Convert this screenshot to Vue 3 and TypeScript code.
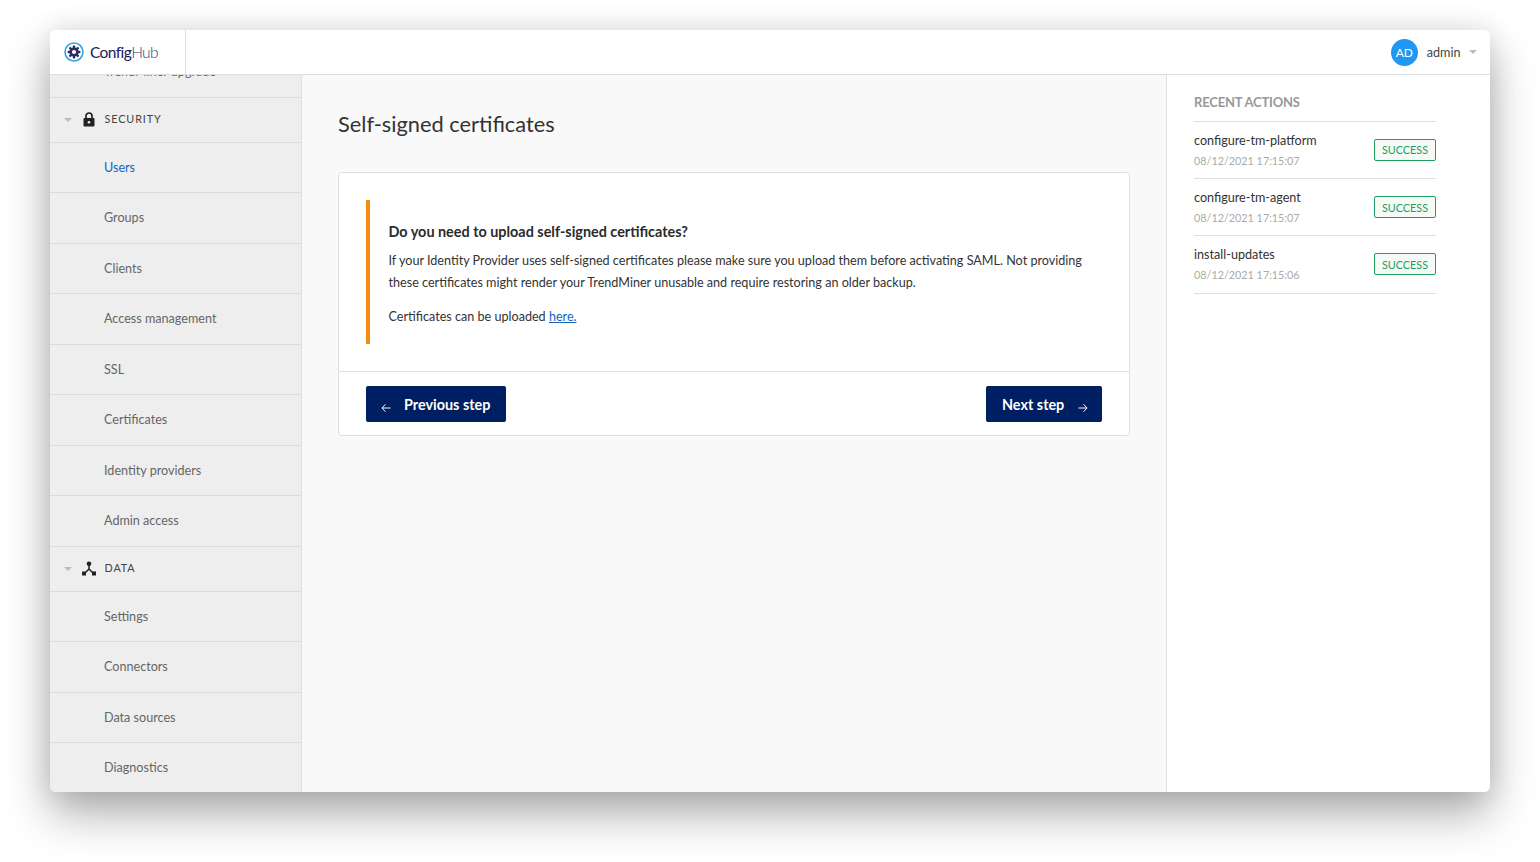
<script setup lang="ts">
const security: string[] = ['Users', 'Groups', 'Clients', 'Access management', 'SSL', 'Certificates', 'Identity providers', 'Admin access']
const data: string[] = ['Settings', 'Connectors', 'Data sources', 'Diagnostics']
const actions = [
  { name: 'configure-tm-platform', time: '08/12/2021 17:15:07' },
  { name: 'configure-tm-agent', time: '08/12/2021 17:15:07' },
  { name: 'install-updates', time: '08/12/2021 17:15:06' },
]
</script>

<template>
  <div class="page">
    <div class="window">
      <header class="topbar">
        <div class="brand">
          <svg class="logo" width="20" height="20" viewBox="0 0 20 20">
            <circle cx="10" cy="10" r="9" fill="none" stroke="#2ea3e0" stroke-width="1.6" />
            <g fill="#2f2a62">
              <circle cx="10" cy="10" r="4.6" />
              <rect x="8.8" y="3.6" width="2.4" height="12.8" rx=".6" />
              <rect x="8.8" y="3.6" width="2.4" height="12.8" rx=".6" transform="rotate(45 10 10)" />
              <rect x="8.8" y="3.6" width="2.4" height="12.8" rx=".6" transform="rotate(90 10 10)" />
              <rect x="8.8" y="3.6" width="2.4" height="12.8" rx=".6" transform="rotate(135 10 10)" />
            </g>
            <circle cx="10" cy="10" r="2.1" fill="#fff" />
          </svg>
          <span class="brand-text">Config<span class="hub">Hub</span></span>
        </div>
        <div class="user">
          <span class="avatar">AD</span>
          <span class="uname">admin</span>
          <span class="caret"></span>
        </div>
      </header>
      <div class="body">
        <aside class="sidebar">
          <div class="nav">
            <div class="row">TrendMiner upgrade</div>
            <div class="section">
              <span class="caret"></span>
              <svg class="sec-icon lock" width="12" height="15" viewBox="0 0 12 15">
                <path d="M3 6.5V4a3 3 0 0 1 6 0v2.500" fill="none" stroke="#222" stroke-width="1.7" />
                <rect x="0.500" y="6" width="11" height="8.500" rx="1" fill="#222" />
                <circle cx="6" cy="10.200" r="1.300" fill="#eee" />
              </svg>
              <span class="sec-label">SECURITY</span>
            </div>
            <div v-for="item in security" :key="item" class="row" :class="{ active: item === 'Users' }">{{ item }}</div>
            <div class="section">
              <span class="caret"></span>
              <svg class="sec-icon" width="14" height="15" viewBox="0 0 14 15">
                <circle cx="7" cy="2.800" r="2.300" fill="#222" />
                <path d="M7 3v5M7 8l-4 4M7 8l4 4" fill="none" stroke="#222" stroke-width="1.500" />
                <rect x="0" y="10.500" width="4" height="4" fill="#222" />
                <rect x="10" y="10.500" width="4" height="4" fill="#222" />
              </svg>
              <span class="sec-label">DATA</span>
            </div>
            <div v-for="item in data" :key="item" class="row">{{ item }}</div>
          </div>
        </aside>
        <main class="main">
          <h1 class="title">Self-signed certificates</h1>
          <section class="card">
            <div class="card-body">
              <div class="notice">
                <h2 class="notice-title">Do you need to upload self-signed certificates?</h2>
                <p class="para">If your Identity Provider uses self-signed certificates please make sure you upload them before activating SAML. Not providing these certificates might render your TrendMiner unusable and require restoring an older backup.</p>
                <p class="para last">Certificates can be uploaded <a class="link" href="#">here.</a></p>
              </div>
            </div>
            <div class="card-foot">
              <button class="btn prev">
                <svg class="arrow" width="10" height="10" viewBox="0 0 10 10"><path d="M9.500 5H1M4.500 1.300 0.900 5l3.600 3.700" fill="none" stroke="#fff" stroke-width="1" /></svg>
                <span class="btn-text">Previous step</span>
              </button>
              <button class="btn next">
                <span class="btn-text">Next step</span>
                <svg class="arrow" width="10" height="10" viewBox="0 0 10 10"><path d="M.5 5H9M5.500 1.300 9.100 5 5.500 8.700" fill="none" stroke="#fff" stroke-width="1" /></svg>
              </button>
            </div>
          </section>
        </main>
        <aside class="recent">
          <h3 class="recent-title">RECENT ACTIONS</h3>
          <div v-for="a in actions" :key="a.name" class="action">
            <div class="action-text">
              <div class="action-name">{{ a.name }}</div>
              <div class="action-time">{{ a.time }}</div>
            </div>
            <span class="badge">SUCCESS</span>
          </div>
        </aside>
      </div>
    </div>
  </div>
</template>

<style>
html, body { margin: 0; background: #fff; }
</style>

<style scoped>
.page {
  width: 1540px;
  height: 862px;
  padding: 30px 50px 70px;
  box-sizing: border-box;
  overflow: hidden;
  background: #fff;
  font-family: Lato, "Liberation Sans", sans-serif;
  color: #333;
}
.window {
  width: 1440px;
  height: 762px;
  display: flex;
  flex-direction: column;
  border-radius: 6px;
  overflow: hidden;
  background: #fff;
  box-shadow: 0 22px 45px rgba(0, 0, 0, .32), 0 0 28px rgba(0, 0, 0, .1);
}
.topbar {
  height: 45px;
  flex: none;
  box-sizing: border-box;
  display: flex;
  align-items: center;
  justify-content: space-between;
  background: #fff;
  border-bottom: 1px solid #dedede;
}
.brand {
  width: 136px;
  height: 44px;
  box-sizing: border-box;
  border-right: 1px solid #dedede;
  display: flex;
  align-items: center;
  padding-left: 14px;
  gap: 6px;
}
.brand-text {
  font-size: 15.500px;
  line-height: 18px;
  margin-top: -1px;
  letter-spacing: -.6px;
  color: #14205c;
}
.hub { font-weight: 300; color: #2c3a78; }
.user {
  display: flex;
  align-items: center;
  padding-right: 13px;
}
.avatar {
  width: 27px;
  height: 27px;
  border-radius: 50%;
  background: #2196f3;
  color: #fff;
  font-size: 12px;
  display: flex;
  align-items: center;
  justify-content: center;
}
.uname {
  font-size: 12.600px;
  margin: 0 8.500px 0 9px;
  color: #444;
}
.caret {
  width: 0;
  height: 0;
  border-left: 4.500px solid transparent;
  border-right: 4.500px solid transparent;
  border-top: 4.500px solid #bbb;
  display: block;
}
.body {
  flex: 1;
  display: flex;
  min-height: 0;
}
.sidebar {
  width: 252px;
  flex: none;
  box-sizing: border-box;
  background: #eee;
  border-right: 1px solid #e0e0e0;
  overflow: hidden;
}
.nav { margin-top: -28px; }
.row {
  height: 50.500px;
  box-sizing: border-box;
  padding-left: 54px;
  display: flex;
  align-items: center;
  font-size: 12.600px;
  color: #666;
  border-bottom: 1px solid #dcdcdc;
}
.row.active { color: #1565c0; }
.section {
  height: 45px;
  box-sizing: border-box;
  display: flex;
  align-items: center;
  padding-left: 14px;
  border-bottom: 1px solid #dcdcdc;
  position: relative;
}
.sec-icon {
  position: absolute;
  left: 32px;
  top: 14px;
}
.sec-icon.lock { left: 33px; }
.sec-label {
  margin-left: 32.500px;
  margin-top: -2px;
  font-size: 10.800px;
  letter-spacing: .9px;
  color: #444;
}
.main {
  width: 864px;
  flex: none;
  box-sizing: border-box;
  background: #f9f9f9;
  padding: 0 36px;
}
.title {
  margin: 34px 0 34px;
  font-size: 21.800px;
  line-height: 29px;
  font-weight: 400;
  color: #333;
}
.card {
  width: 792px;
  box-sizing: border-box;
  background: #fff;
  border: 1px solid #e0e0e0;
  border-radius: 4px;
}
.card-body {
  padding: 27px;
  border-bottom: 1px solid #e0e0e0;
}
.notice {
  border-left: 4px solid #f78c11;
  padding: 22px 10px 14px 18.500px;
  height: 144px;
  box-sizing: border-box;
}
.notice-title {
  margin: 0 0 8px;
  font-size: 14.400px;
  line-height: 20px;
  font-weight: 700;
  color: #2b2b2b;
}
.para {
  margin: 0 0 12px;
  font-size: 12.600px;
  line-height: 22px;
  color: #333;
}
.para.last { margin: 0; }
.link { color: #1565c0; text-decoration: underline; }
.card-foot {
  height: 63px;
  box-sizing: border-box;
  padding: 14px 27px 0;
  display: flex;
  justify-content: space-between;
  align-items: flex-start;
}
.btn {
  height: 36px;
  border: none;
  border-radius: 2px;
  background: #001e62;
  color: #fff;
  font-family: inherit;
  font-size: 14.400px;
  font-weight: 700;
  display: flex;
  align-items: center;
  padding: 0 16px;
  white-space: nowrap;
}
.btn.prev { width: 140px; padding-left: 15px; }
.btn.next { width: 116px; }
.btn-text { margin-top: 1px; }
.arrow { margin-top: 7px; flex: none; }
.prev .arrow { margin-right: 13px; }
.next .arrow { margin-left: 14px; }
.recent {
  flex: 1;
  min-width: 0;
  box-sizing: border-box;
  background: #fff;
  border-left: 1px solid #e0e0e0;
  padding: 0 54px 0 27px;
}
.recent-title {
  margin: 0;
  height: 47px;
  box-sizing: border-box;
  padding-top: 19px;
  font-size: 13px;
  line-height: 16px;
  font-weight: 700;
  color: #999;
  letter-spacing: -.2px;
  border-bottom: 1px solid #e0e0e0;
}
.action {
  height: 57.200px;
  box-sizing: border-box;
  display: flex;
  align-items: center;
  justify-content: space-between;
  border-bottom: 1px solid #e0e0e0;
}
.action-name {
  font-size: 12.600px;
  line-height: 18px;
  color: #333;
  padding-top: .5px;
}
.action-time {
  font-size: 10.800px;
  line-height: 16px;
  margin-top: 3.500px;
  color: #aaa;
}
.badge {
  width: 62px;
  height: 22px;
  box-sizing: border-box;
  border: 1px solid #1f9d63;
  border-radius: 2px;
  background: #f5faf7;
  color: #1f9d63;
  font-size: 10.800px;
  display: flex;
  align-items: center;
  justify-content: center;
  padding-bottom: .5px;
}
</style>
